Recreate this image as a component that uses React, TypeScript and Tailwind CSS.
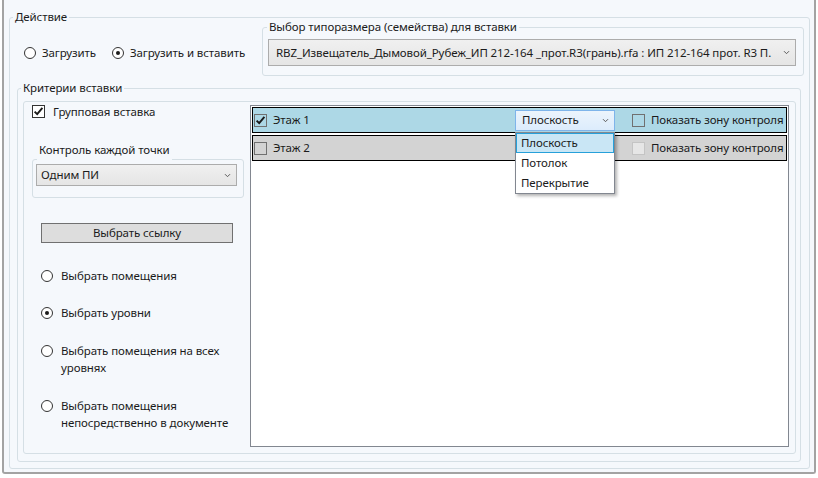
import React from "react";

const Chevron = () => (
  <svg width="7" height="5" viewBox="0 0 7 5" className="shrink-0">
    <path d="M1 1.2 L3.5 3.7 L6 1.2" fill="none" stroke="#5a5a5a" strokeWidth="1" />
  </svg>
);

const Check = () => (
  <svg width="11" height="11" viewBox="0 0 11 11">
    <path d="M1.6 5.6 L4.2 8.2 L9.4 1.9" fill="none" stroke="#1a1a1a" strokeWidth="1.9" />
  </svg>
);

const CheckBox = ({ checked = false, disabled = false, white = false }: { checked?: boolean; disabled?: boolean; white?: boolean }) => (
  <span
    className={`flex h-[13px] w-[13px] shrink-0 items-center justify-center border ${
      disabled ? "border-[#c4c4c4] bg-[#e6e6e6]" : white ? "border-[#333333] bg-white" : "border-[#707070]"
    }`}
  >
    {checked && <Check />}
  </span>
);

const Radio = ({ checked = false }: { checked?: boolean }) => (
  <span className="flex h-[12px] w-[12px] shrink-0 items-center justify-center rounded-full border border-[#333333] bg-white">
    {checked && <span className="h-[4px] w-[4px] rounded-full bg-[#1a1a1a]" />}
  </span>
);

const levels = ["Этаж 1", "Этаж 2"];

export default function App() {
  return (
    <div className="h-[478px] w-[818px] bg-white font-['Noto_Sans',sans-serif] text-[11.5px] leading-[16px] tracking-[-0.1px] text-[#1b1b1b]">
      <div className="ml-[2px] h-[474px] w-[814px] rounded-b-[3px] border-x-2 border-b-2 border-[#a3a3a3] bg-[#f5f8fc] pl-[5px] pt-[9px]">
        {/* Действие */}
        <fieldset className="h-[460px] w-[801px] rounded-[3px] border border-[#d5dfe5]">
          <legend className="ml-[3px] px-[2px]">Действие</legend>

          <div className="flex">
            <div className="flex w-[252px] shrink-0 items-start pl-[14px] pt-[20px]">
              <label className="flex h-[16px] w-[88px] shrink-0 items-center gap-[6px]">
                <Radio />
                <span>Загрузить</span>
              </label>
              <label className="flex h-[16px] items-center gap-[6px] whitespace-nowrap">
                <Radio checked />
                <span>Загрузить и вставить</span>
              </label>
            </div>

            <fieldset className="-mt-[6px] h-[57px] w-[542px] shrink-0 rounded-[3px] border border-[#d5dfe5]">
              <legend className="ml-[4px] px-[2px]">Выбор типоразмера (семейства) для вставки</legend>
              <div className="ml-[5px] mt-[4px] flex h-[27px] w-[528px] items-center border border-[#acacac] bg-gradient-to-b from-[#f0f0f0] to-[#e5e5e5] pl-[7px] pr-[5px]">
                <span className="min-w-0 flex-1 overflow-hidden whitespace-nowrap">
                  RBZ_Извещатель_Дымовой_Рубеж_ИП 212-164 _прот.R3(грань).rfa : ИП 212-164 прот. R3 П.
                </span>
                <span className="ml-[4px]">
                  <Chevron />
                </span>
              </div>
            </fieldset>
          </div>

          {/* Критерии вставки */}
          <fieldset className="ml-[7px] mt-[4px] h-[382px] w-[784px] rounded-[3px] border border-[#d5dfe5]">
            <legend className="ml-[3px] px-[2px]">Критерии вставки</legend>

            <div className="ml-[5px] mt-[5px] flex h-[353px] w-[773px] rounded-[3px] border border-[#d5dfe5]">
              <div className="flex w-[226px] shrink-0 flex-col">
                <label className="ml-[8px] mt-[3px] flex h-[13px] items-center">
                  <CheckBox checked white />
                  <span className="ml-[8px]">Групповая вставка</span>
                </label>

                <fieldset className="ml-[8px] mt-[36px] h-[44px] w-[212px] rounded-[3px] border border-[#d5dfe5]">
                  <legend className="ml-[4px] -translate-y-[9px] px-[2px] leading-[10px]">Контроль каждой точки</legend>
                  <div className="ml-[3px] flex h-[22px] w-[201px] items-center justify-between border border-[#acacac] bg-gradient-to-b from-[#f0f0f0] to-[#e5e5e5] pl-[4px] pr-[5px]">
                    <span>Одним ПИ</span>
                    <Chevron />
                  </div>
                </fieldset>

                <button className="ml-[17px] mt-[25px] h-[20px] w-[192px] border border-[#707070] bg-[#dddddd] leading-[16px]">
                  Выбрать ссылку
                </button>

                <div className="ml-[17px] flex flex-col leading-[17px]">
                  <label className="mt-[24px] flex items-start gap-[8px]">
                    <span className="mt-[3px]"><Radio /></span>
                    <span>Выбрать помещения</span>
                  </label>
                  <label className="mt-[20px] flex items-start gap-[8px]">
                    <span className="mt-[3px]"><Radio checked /></span>
                    <span>Выбрать уровни</span>
                  </label>
                  <label className="mt-[21px] flex items-start gap-[8px] whitespace-nowrap">
                    <span className="mt-[3px]"><Radio /></span>
                    <span>
                      Выбрать помещения на всех
                      <br />
                      уровнях
                    </span>
                  </label>
                  <label className="mt-[21px] flex items-start gap-[8px] whitespace-nowrap">
                    <span className="mt-[3px]"><Radio /></span>
                    <span>
                      Выбрать помещения
                      <br />
                      непосредственно в документе
                    </span>
                  </label>
                </div>
              </div>

              {/* список уровней */}
              <div className="mt-[3px] flex h-[342px] w-[539px] shrink-0 flex-col gap-[2px] border border-[#828790] bg-white px-[1px] pt-[1px]">
                {levels.map((name, i) => (
                  <div
                    key={name}
                    className={`flex h-[26px] shrink-0 items-center border border-black ${i === 0 ? "bg-[#add8e6]" : "bg-[#d3d3d3]"}`}
                  >
                    <span className="ml-[1px] shrink-0">
                      <CheckBox checked={i === 0} />
                    </span>
                    <span className="ml-[6px] w-[242px] shrink-0 whitespace-nowrap">{name}</span>
                    {i === 0 ? (
                      <div className="relative w-[100px] shrink-0">
                        <div className="flex h-[21px] w-[100px] items-center justify-between border border-[#7eb4ea] bg-gradient-to-b from-[#ecf4fc] to-[#dcecfc] pl-[6px] pr-[5px]">
                          <span>Плоскость</span>
                          <Chevron />
                        </div>
                        <div className="absolute left-0 top-[22px] z-10 flex h-[62px] w-[100px] flex-col border border-[#828790] bg-white shadow-[2px_2px_3px_rgba(0,0,0,0.3)]">
                          <div className="flex h-[20px] items-center border border-[#26a0da] bg-[#c9e6f5] pl-[4px]">Плоскость</div>
                          <div className="flex h-[20px] items-center pl-[5px]">Потолок</div>
                          <div className="flex h-[20px] items-center pl-[5px]">Перекрытие</div>
                        </div>
                      </div>
                    ) : (
                      <div className="w-[100px] shrink-0" />
                    )}
                    <span className="ml-[17px] shrink-0">
                      <CheckBox disabled={i === 1} />
                    </span>
                    <span className="ml-[6px] min-w-0 overflow-hidden whitespace-nowrap">Показать зону контроля</span>
                  </div>
                ))}
              </div>
            </div>
          </fieldset>
        </fieldset>
      </div>
    </div>
  );
}
